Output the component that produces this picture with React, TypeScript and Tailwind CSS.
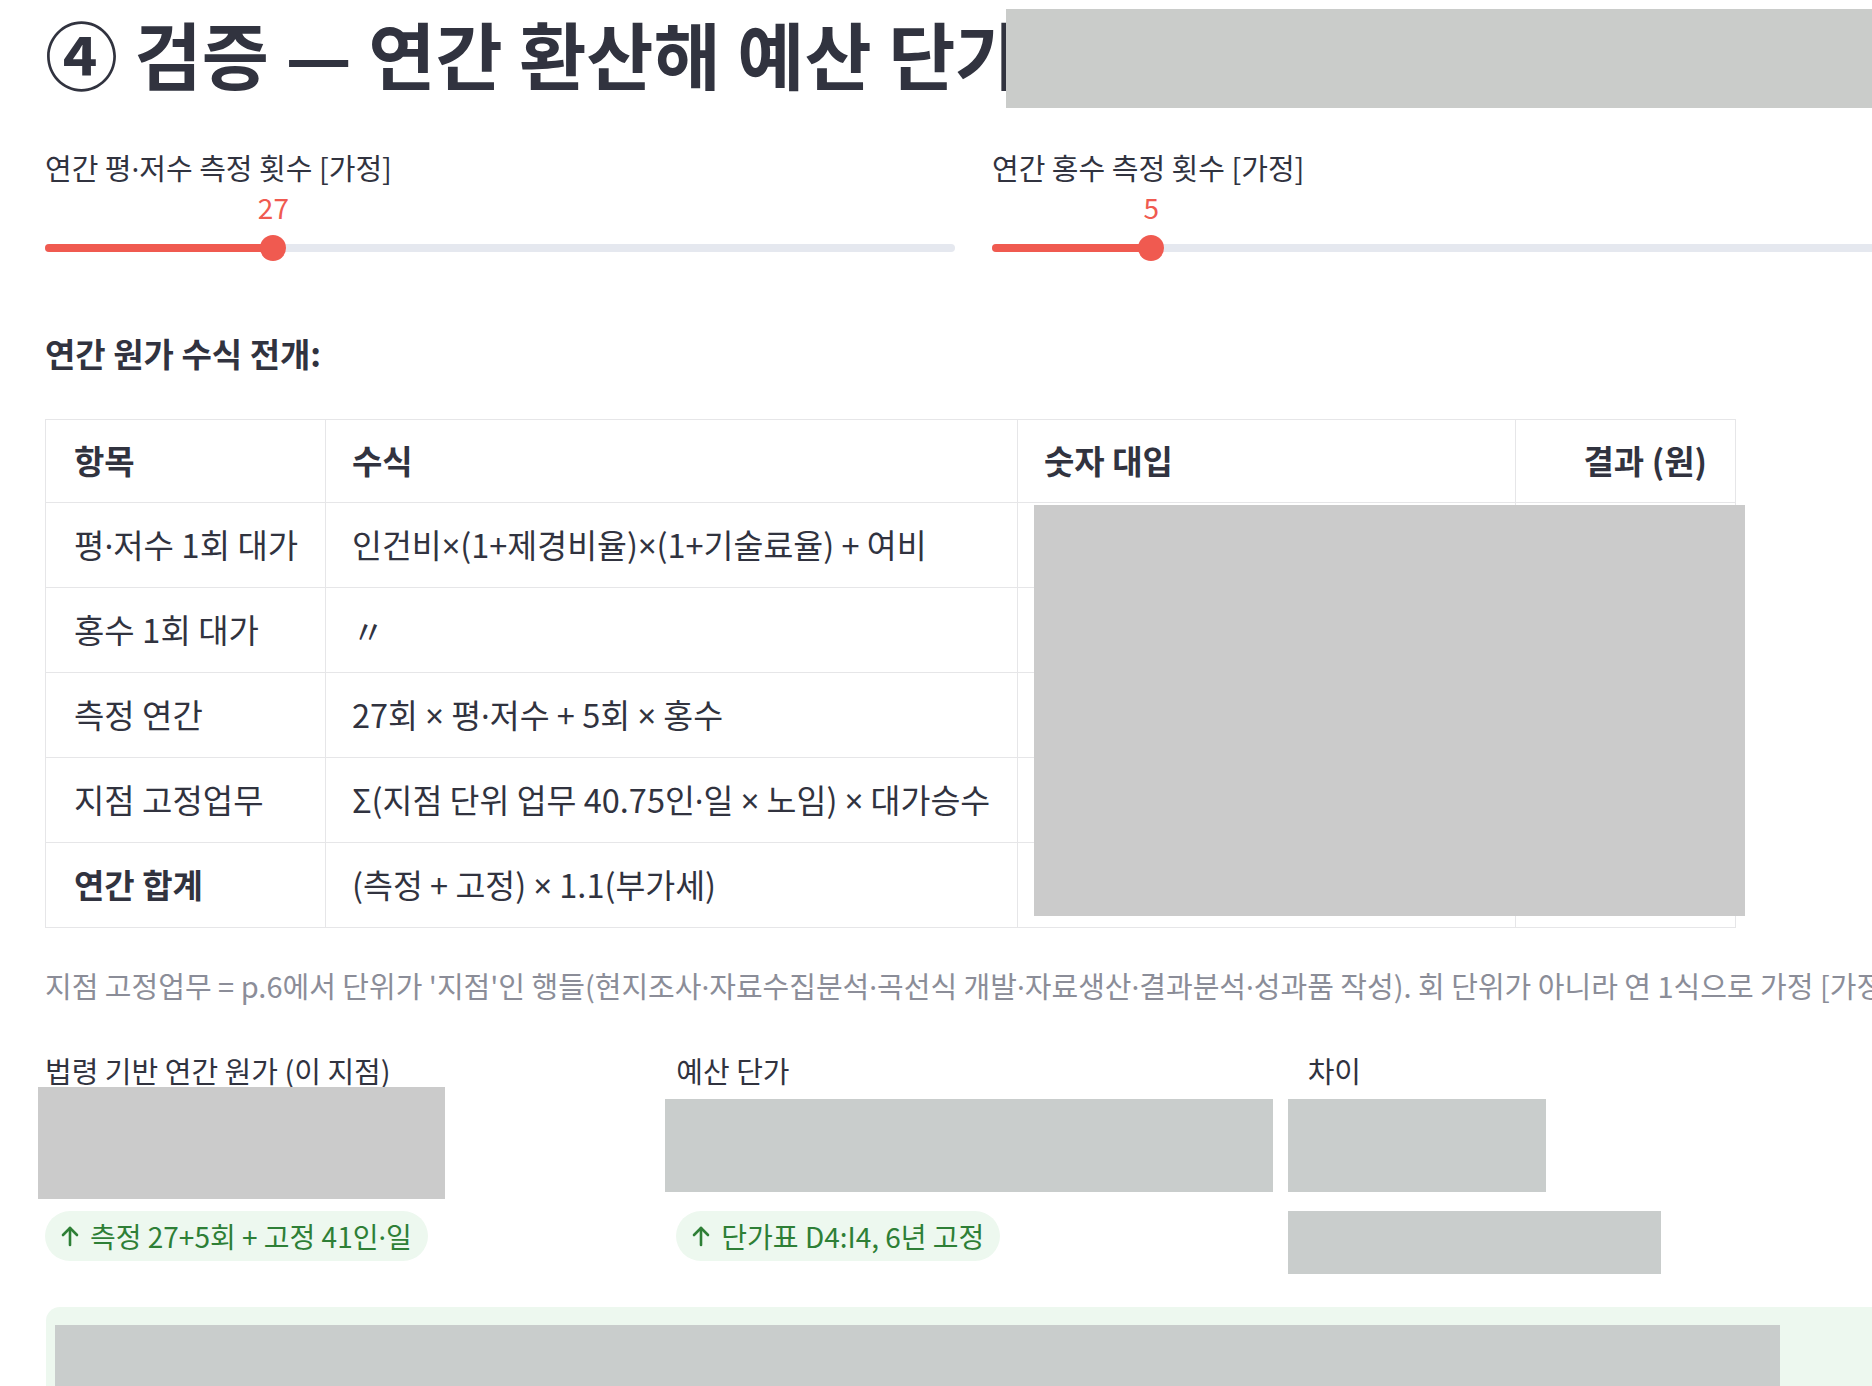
import React from "react";

interface SliderProps {
  label: string;
  value: number;
  percent: number;
}

interface Row {
  item: string;
  formula: string;
  bold?: boolean;
}

const rows: Row[] = [
  { item: "평·저수 1회 대가", formula: "인건비×(1+제경비율)×(1+기술료율) + 여비" },
  { item: "홍수 1회 대가", formula: "〃" },
  { item: "측정 연간", formula: "27회 × 평·저수 + 5회 × 홍수" },
  { item: "지점 고정업무", formula: "Σ(지점 단위 업무 40.75인·일 × 노임) × 대가승수" },
  { item: "연간 합계", formula: "(측정 + 고정) × 1.1(부가세)", bold: true },
];

// The CJK font draws · and × full width; the original uses narrow Latin ones
function Txt({ text }: { text: string }) {
  const parts = text.split(/([·×])/);
  return (
    <>
      {parts.map((p, i) =>
        p === "·" || p === "×" ? (
          <span key={i} className="font-['Noto_Sans']">
            {p}
          </span>
        ) : (
          <React.Fragment key={i}>{p}</React.Fragment>
        )
      )}
    </>
  );
}

function Slider({ label, value, percent }: SliderProps) {
  return (
    <div className="flex flex-col">
      <div className="h-[40px] text-[29px] leading-[40px] text-[#31333f]">
        <Txt text={label} />
      </div>
      <div className="relative mt-[2px] h-[36px]">
        <span
          className="absolute top-0 -translate-x-1/2 text-[28px] leading-[36px] text-[#f05a50]"
          style={{ left: `${percent}%` }}
        >
          {value}
        </span>
      </div>
      <div className="relative mt-[9px] h-[28px]">
        <div className="absolute left-0 right-0 top-[10px] h-[8px] rounded-full bg-[#e5e8ef]" />
        <div
          className="absolute left-0 top-[10px] h-[8px] rounded-full bg-[#f05a50]"
          style={{ width: `${percent}%` }}
        />
        <div
          className="absolute top-[1px] h-[26px] w-[26px] -translate-x-1/2 rounded-full bg-[#f05a50]"
          style={{ left: `${percent}%` }}
        />
      </div>
    </div>
  );
}

function ArrowUp() {
  return (
    <svg width="18" height="22" viewBox="0 0 18 22" fill="none" stroke="#2e7f36" strokeWidth="2.6" strokeLinecap="round" strokeLinejoin="round">
      <path d="M9 20V3" />
      <path d="M2 10l7-7 7 7" />
    </svg>
  );
}

function DeltaPill({ text }: { text: string }) {
  return (
    <div className="inline-flex h-[50px] items-center gap-[11px] rounded-full bg-[#edf8ef] pl-[16px] pr-[16px] text-[28px] text-[#2e7f36]">
      <ArrowUp />
      <span>
        <Txt text={text} />
      </span>
    </div>
  );
}

export default function App() {
  return (
    <div
      className="relative h-[1386px] w-[1872px] overflow-hidden bg-white pt-[10px] text-[#31333f]"
      style={{ fontFamily: '"Noto Sans CJK KR", "Noto Sans", sans-serif' }}
    >
      <div className="ml-[45px] w-[1857px]">
        {/* Title */}
        <div className="relative">
          <h2 className="whitespace-nowrap text-[73px] font-bold leading-[84px]">
            ④ 검증 — 연간 환산해 예산 단가와 비교
          </h2>
          <div className="absolute left-[961px] top-[-1px] h-[99px] w-[900px] bg-[#caccca]" />
        </div>

        {/* Sliders */}
        <div className="mt-[53px] grid grid-cols-2 gap-[37px]">
          <Slider label="연간 평·저수 측정 횟수 [가정]" value={27} percent={25.1} />
          <Slider label="연간 홍수 측정 횟수 [가정]" value={5} percent={17.5} />
        </div>

        <div className="mt-[69px] h-[44px] text-[33px] font-bold leading-[44px]">연간 원가 수식 전개:</div>

        {/* Formula table */}
        <div className="relative mt-[44px] w-[1690px]">
          <table className="w-full table-fixed border-collapse text-[33px]">
            <colgroup>
              <col className="w-[280px]" />
              <col className="w-[692px]" />
              <col className="w-[498px]" />
              <col className="w-[220px]" />
            </colgroup>
            <thead>
              <tr className="h-[83px]">
                <th className="border border-[#e6e6e8] px-[28px] text-left font-bold">항목</th>
                <th className="border border-[#e6e6e8] px-[26px] text-left font-bold">수식</th>
                <th className="border border-[#e6e6e8] px-[26px] text-left font-bold">숫자 대입</th>
                <th className="border border-[#e6e6e8] px-[28px] text-right font-bold">결과 (원)</th>
              </tr>
            </thead>
            <tbody>
              {rows.map((r) => (
                <tr key={r.item} className="h-[85px]">
                  <td className={`whitespace-nowrap border border-[#e6e6e8] px-[28px] ${r.bold ? "font-bold" : ""}`}>
                    <Txt text={r.item} />
                  </td>
                  <td className="whitespace-nowrap border border-[#e6e6e8] px-[26px] text-[32.5px]">
                    <Txt text={r.formula} />
                  </td>
                  <td className="border border-[#e6e6e8] px-[26px]"></td>
                  <td className="border border-[#e6e6e8] px-[28px] text-right"></td>
                </tr>
              ))}
            </tbody>
          </table>
          <div className="absolute left-[989px] top-[86px] h-[411px] w-[711px] bg-[#cbcbcb]" />
        </div>

        <p className="mt-[37px] h-[40px] whitespace-nowrap text-[29px] leading-[40px] text-[#8b8d98]">
          <Txt text="지점 고정업무 = p.6에서 단위가 '지점'인 행들(현지조사·자료수집분석·곡선식 개발·자료생산·결과분석·성과품 작성). 회 단위가 아니라 연 1식으로 가정 [가정]" />
        </p>

        {/* Metrics */}
        <div className="mt-[45px] grid grid-cols-3 gap-[37px]">
          <div>
            <div className="h-[40px] text-[29px] leading-[40px]">법령 기반 연간 원가 (이 지점)</div>
            <div className="relative h-[116px]">
              <div className="absolute left-[-7px] top-[-3px] h-[112px] w-[407px] bg-[#cbcbcb]" />
            </div>
            <div className="mt-[5px]">
              <DeltaPill text="측정 27+5회 + 고정 41인·일" />
            </div>
          </div>
          <div>
            <div className="h-[40px] text-[29px] leading-[40px]">예산 단가</div>
            <div className="relative h-[116px]">
              <div className="absolute left-[-11px] top-[9px] h-[93px] w-[608px] bg-[#c9cdcc]" />
            </div>
            <div className="mt-[5px]">
              <DeltaPill text="단가표 D4:I4, 6년 고정" />
            </div>
          </div>
          <div>
            <div className="h-[40px] text-[29px] leading-[40px]">차이</div>
            <div className="relative h-[116px]">
              <div className="absolute left-[-20px] top-[9px] h-[93px] w-[258px] bg-[#c9cdcc]" />
            </div>
            <div className="relative mt-[7px] h-[50px]">
              <div className="absolute left-[-20px] top-[-2px] h-[63px] w-[373px] bg-[#c9cdcc]" />
            </div>
          </div>
        </div>

        {/* Success box */}
        <div className="ml-[1px] mt-[44px] h-[140px] rounded-[14px] bg-[#edf8ef] pl-[9px] pt-[18px]">
          <div className="h-[120px] w-[1725px] bg-[#c9cdcc]" />
        </div>
      </div>
    </div>
  );
}
